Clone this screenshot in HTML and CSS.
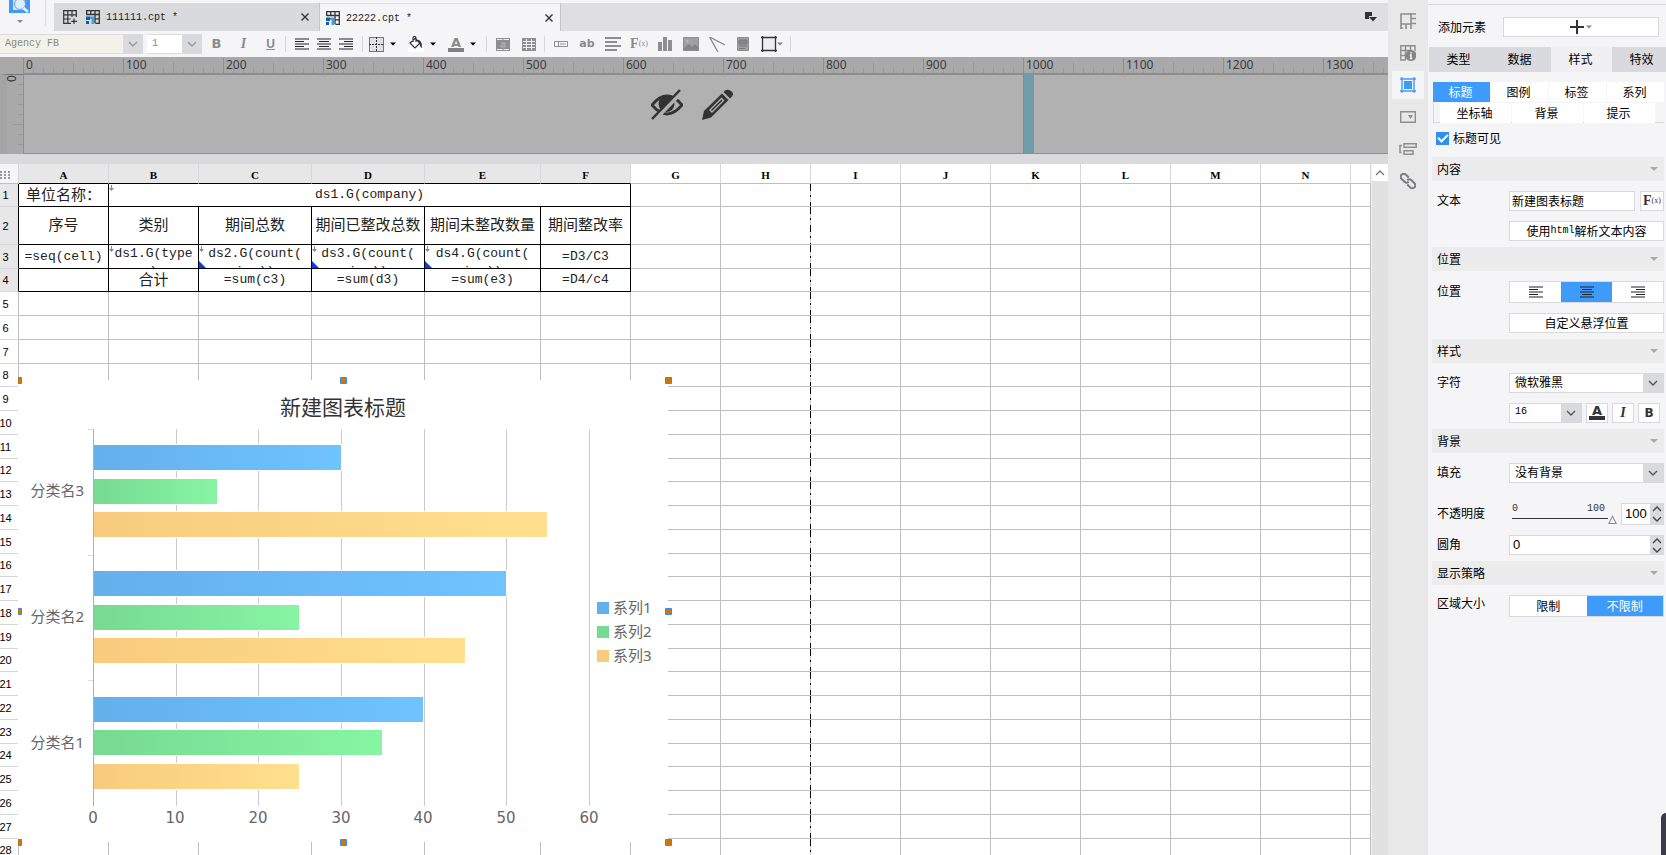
FILE: index.html
```html
<!DOCTYPE html>
<html lang="zh-CN">
<head>
<meta charset="utf-8">
<title>22222.cpt</title>
<link rel="stylesheet" href="styles.css">
</head>
<body>
<svg class="defs" width="0" height="0" aria-hidden="true">
  <symbol id="chev" viewBox="0 0 10 6"><path d="M1 1l4 4 4-4" fill="none" stroke="currentColor" stroke-width="1.4"/></symbol>
  <symbol id="chev-up" viewBox="0 0 10 6"><path d="M1 5l4-4 4 4" fill="none" stroke="currentColor" stroke-width="1.4"/></symbol>
  <symbol id="tri" viewBox="0 0 8 4"><path d="M0 0h8L4 4z" fill="currentColor"/></symbol>
  <symbol id="left" viewBox="0 0 14 12"><path d="M0 1h14M0 3.5h9M0 6h14M0 8.500h9M0 11h14" stroke="currentColor" stroke-width="1.2"/></symbol>
  <symbol id="center" viewBox="0 0 14 12"><path d="M0 1h14M2 3.500h10M0 6h14M2 8.500h10M0 11h14" stroke="currentColor" stroke-width="1.2"/></symbol>
  <symbol id="right" viewBox="0 0 14 12"><path d="M0 1h14M5 3.500h9M0 6h14M5 8.500h9M0 11h14" stroke="currentColor" stroke-width="1.2"/></symbol>
  <symbol id="cpt" viewBox="0 0 14 14"><path d="M.7 5V.7h12.600v12.600H9.500M.7 4.500h12.600M4.800.7v3.800M9 .7v12.600M9 8.800h4.300" fill="none" stroke="#333" stroke-width="1.3"/><path d="M0 6.500h4V10H0zM0 11h3v3H0z" fill="#0f5cab"/><path d="M4 6.500h4V14H5.500V9H4z" fill="#3ba3ea"/></symbol>
  <symbol id="x" viewBox="0 0 8 8"><path d="M.5.5l7 7M7.500.5l-7 7" stroke="#333" stroke-width="1.4"/></symbol>
</svg>
<div class="app">
  <main class="work">
    <header class="tabs">
      <div class="logo">
        <svg width="21" height="13" viewBox="0 0 21 13"><path d="M0 0h21v13H0z" fill="#3f9bfa"/><path d="M4 0h12v10H4z" fill="#cfe5fb"/><circle cx="11" cy="4" r="5.500" fill="#dceefc" stroke="#8b98a5"/><path d="M14.500 8l4.500 4" stroke="#eef3f8" stroke-width="2.500"/></svg>
        <svg class="dim" width="6" height="3"><use href="#tri"/></svg>
      </div>
      <div class="tab first">
        <svg width="14" height="14" viewBox="0 0 14 14"><path d="M8 13.300H.7V.7h12.600V7M.7 4.800h12.600M.7 9h7M4.800.7v12.600M9 .7V7M11 8.500v5.500M8.300 11.300H14" fill="none" stroke="#333" stroke-width="1.200"/></svg>
        <svg width="14" height="14"><use href="#cpt"/></svg>
        <span>111111.cpt *</span>
        <button class="close" aria-label="关闭 111111.cpt"><svg width="8" height="8"><use href="#x"/></svg></button>
      </div>
      <div class="tab active">
        <svg width="14" height="14"><use href="#cpt"/></svg>
        <span>22222.cpt *</span>
        <button class="close" aria-label="关闭 22222.cpt"><svg width="8" height="8"><use href="#x"/></svg></button>
      </div>
      <div class="tab-fill"><svg width="12" height="10" viewBox="0 0 12 10"><path d="M0 0h7v4H4v3H0z" fill="#333"/><path d="M4 5h8L8 9.500z" fill="#333"/></svg></div>
    </header>

    <div class="toolbar">
      <div class="combo font-family"><select aria-label="字体" disabled><option>Agency FB</option></select><span class="drop"><svg width="10" height="6"><use href="#chev"/></svg></span></div>
      <div class="combo font-size"><select aria-label="字号"><option>1</option></select><span class="drop"><svg width="10" height="6"><use href="#chev"/></svg></span></div>
      <div class="group wide">
        <button aria-label="加粗"><b>B</b></button>
        <button aria-label="倾斜"><i>I</i></button>
        <button aria-label="下划线"><u>U</u></button>
      </div>
      <div class="group aligns">
        <button aria-label="左对齐"><svg width="14" height="12"><use href="#left"/></svg></button>
        <button aria-label="居中"><svg width="14" height="12"><use href="#center"/></svg></button>
        <button aria-label="右对齐"><svg width="14" height="12"><use href="#right"/></svg></button>
      </div>
      <div class="group drops">
        <button aria-label="边框"><svg width="15" height="15" viewBox="0 0 15 15"><path d="M.5.5h14v14H.5z" fill="#e2e2e4" stroke="#000" stroke-dasharray="1 1"/><path d="M7.500 0v15M0 7.500h15" stroke="#333" stroke-dasharray="2 1"/></svg><svg class="ink" width="6" height="4"><use href="#tri"/></svg></button>
        <button aria-label="填充颜色"><svg width="16" height="16" viewBox="0 0 16 16"><path d="M0 12h16v4H0z" fill="#fff"/><path d="M7 2.500l5 4.500-5 5-5-5zM5 6V2q0-1.500 1.500-1.500T8 2v4" fill="#fff" stroke="#333" stroke-width="1.200"/><path d="M9 3.500q5.500.5 5 8.500-2-1-2.500-4z" fill="#333"/></svg><svg class="ink" width="6" height="4"><use href="#tri"/></svg></button>
        <button aria-label="字体颜色"><span class="fore">A</span><svg class="ink" width="6" height="4"><use href="#tri"/></svg></button>
      </div>
      <div class="group pair">
        <button aria-label="合并单元格"><svg width="14" height="13" viewBox="0 0 14 13"><path d="M0 0h14v13H0z" fill="#8e8e8e"/><path d="M1 1.500h5.500M7.500 1.500H13M1 11.500h5.500M7.500 11.500H13" stroke="#eee"/><path d="M5 5h4v4H5V7h4" fill="none" stroke="#b5b5b5"/></svg></button>
        <button aria-label="取消合并"><svg width="14" height="13" viewBox="0 0 14 13"><path d="M0 0h14v13H0z" fill="#8e8e8e"/><path d="M1 3.500h12M1 6.500h12M1 9.500h12M4.500 1v11M9.500 1v11" stroke="#eee"/></svg></button>
      </div>
      <div class="group insert">
        <button aria-label="文本框"><svg width="14" height="6" viewBox="0 0 14 6"><path d="M.5.5h13v5H.5zM4.500 0v6M6 3h5.500" fill="none" stroke="#8e8e8e"/></svg></button>
        <button class="ab">ab</button>
        <button aria-label="富文本"><svg width="16" height="14" viewBox="0 0 16 14"><path d="M0 1h16M0 5h12M0 9h16M0 13h12" stroke="#8e8e8e" stroke-width="1.800"/></svg></button>
        <button class="fx">F<small>(x)</small></button>
        <button aria-label="图表"><svg width="14" height="14" viewBox="0 0 14 14"><path d="M0 5h4v9H0zM5 0h4v14H5zM10 3h4v11h-4z" fill="#8e8e8e"/></svg></button>
        <button aria-label="图片"><svg width="16" height="14" viewBox="0 0 16 14"><path d="M.5.5h15v13H.5z" fill="#a0a0a0" stroke="#8e8e8e"/><path d="M1 11l5-4 3 3 3-3 3 3v3H1z" fill="#858585"/><circle cx="4" cy="4" r="1.500" fill="#b5b5b5"/></svg></button>
        <button aria-label="斜线"><svg width="16" height="15" viewBox="0 0 16 15"><path d="M.5 0L9 15M.5 0L16 8" stroke="#8e8e8e" stroke-width="1.400"/></svg></button>
        <button aria-label="子报表"><svg width="12" height="14" viewBox="0 0 12 14"><path d="M.5.5h11v13H.5z" fill="#a0a0a0" stroke="#8e8e8e"/><path d="M2 3h8v4H2zM2 9h8M2 11.500h6" fill="#858585" stroke="#7b7b7b"/></svg></button>
        <button aria-label="悬浮元素"><svg width="16" height="16" viewBox="0 0 16 16"><path d="M2 2h12v12H2z" fill="#eee"/><path d="M0 1.500h16M0 14.500h16M1.500 0v16M14.500 0v16" stroke="#333" stroke-width="1.300"/></svg><svg class="dim" width="6" height="4"><use href="#tri"/></svg></button>
      </div>
    </div>

    <section class="designer">
      <div class="ruler-x" id="rulerX"></div>
      <div class="ruler-y"><span>0</span></div>
      <div class="canvas">
        <div class="canvas-tools">
          <svg width="32" height="31" viewBox="0 0 32 31"><path d="M1 16Q16-2 31 16 16 34 1 16z" fill="none" stroke="#333" stroke-width="2.800"/><circle cx="15.500" cy="15" r="8" fill="#333"/><path d="M3 31L31 2" stroke="#b1b1b1" stroke-width="5"/><path d="M1 30L29 1" stroke="#333" stroke-width="2.500"/></svg>
          <svg width="31" height="31" viewBox="0 0 31 31"><path d="M20 4.500l6.500 6.500L9 28.500 0 31l2-9z" fill="#333"/><path d="M21.500 3Q24.500-1 29 2t-1 7.500z" fill="#333"/><path d="M8 21L19.500 9.500l2 2L10 23z" fill="none" stroke="#b1b1b1" stroke-width="1.400"/></svg>
        </div>
        <div class="guide"></div>
      </div>
    </section>

    <section class="sheet-wrap">
      <div class="sheet">
        <table>
          <colgroup><col class="c-num"><col class="c90"><col class="c90"><col class="c113"><col class="c113"><col class="c116"><col class="c90"><col class="c90"><col class="c90"><col class="c90"><col class="c90"><col class="c90"><col class="c90"><col class="c90"><col class="c90"><col></colgroup>
          <thead><tr><th class="corner"><svg width="10" height="8" viewBox="0 0 10 8"><path d="M1 0v8M5 0v8M9 0v8" stroke="#999" stroke-width="2" stroke-dasharray="2 1"/></svg></th><th class="sel">A</th><th class="sel">B</th><th class="sel">C</th><th class="sel">D</th><th class="sel">E</th><th class="sel">F</th><th>G</th><th>H</th><th>I</th><th>J</th><th>K</th><th>L</th><th>M</th><th>N</th><th></th></tr></thead>
          <tbody id="rows">
            <tr class="r23 data"><th><span>1</span></th><td class="k cn">单位名称：</td><td class="k mark" colspan="5">ds1.G(company)</td><td></td><td class="page"></td><td></td><td></td><td></td><td></td><td></td><td></td><td></td></tr>
            <tr class="r38 data"><th><span>2</span></th><td class="k cn">序号</td><td class="k cn">类别</td><td class="k cn">期间总数</td><td class="k cn">期间已整改总数</td><td class="k cn">期间未整改数量</td><td class="k cn">期间整改率</td><td></td><td class="page"></td><td></td><td></td><td></td><td></td><td></td><td></td><td></td></tr>
            <tr class="r24 data"><th><span>3</span></th><td class="k">=seq(cell)</td><td class="k mark"><div class="clip">ds1.G(type<br>)</div></td><td class="k mark blue"><div class="clip">ds2.G(count(<br>iss))</div></td><td class="k mark blue"><div class="clip">ds3.G(count(<br>iss))</div></td><td class="k mark blue"><div class="clip">ds4.G(count(<br>iss))</div></td><td class="k">=D3/C3</td><td></td><td class="page"></td><td></td><td></td><td></td><td></td><td></td><td></td><td></td></tr>
            <tr class="r23 data"><th><span>4</span></th><td class="k"></td><td class="k cn">合计</td><td class="k">=sum(c3)</td><td class="k">=sum(d3)</td><td class="k">=sum(e3)</td><td class="k">=D4/c4</td><td></td><td class="page"></td><td></td><td></td><td></td><td></td><td></td><td></td><td></td></tr>
          </tbody>
        </table>
        <div class="float-layer">
          <svg class="chart" width="654" height="470" viewBox="0 -4 654 470">
            <defs>
              <linearGradient id="gb"><stop stop-color="#63b0eb"/><stop offset="1" stop-color="#6fc3ff"/></linearGradient>
              <linearGradient id="gg"><stop stop-color="#76da91"/><stop offset="1" stop-color="#87f5a4"/></linearGradient>
              <linearGradient id="gy"><stop stop-color="#f8cb7f"/><stop offset="1" stop-color="#ffe08e"/></linearGradient>
            </defs>
            <path d="M0 0h650v462H0z" fill="#fff"/>
            <text class="c-title" x="325" y="35" text-anchor="middle">新建图表标题</text>
            <path d="M158.500 49v377M240.500 49v377M323.500 49v377M406.500 49v377M488.500 49v377M571.500 49v377" stroke="#ccc"/>
            <path d="M70 49.500h5M70 175.500h5M70 300.500h5" stroke="#ddd"/>
            <g stroke="#fff">
              <g fill="url(#gb)"><path d="M75 64.500h248.500v26H75z"/><path d="M75 190.500h413.500v26H75z"/><path d="M75 316.500h330.500v26H75z"/></g>
              <g fill="url(#gg)"><path d="M75 98.500h124.500v26H75z"/><path d="M75 224.500h206.500v26H75z"/><path d="M75 349.500h289.500v26H75z"/></g>
              <g fill="url(#gy)"><path d="M75 131.500h454.500v26H75z"/><path d="M75 257.500h372.500v26H75z"/><path d="M75 383.500h206.500v26H75z"/></g>
            </g>
            <path d="M75.500 49v377" stroke="#b0b0b0"/>
            <g class="c-cat" text-anchor="end"><text x="66" y="116">分类名3</text><text x="66" y="242">分类名2</text><text x="66" y="368">分类名1</text></g>
            <g class="c-axis" text-anchor="middle"><text x="75" y="443">0</text><text x="157" y="443">10</text><text x="240" y="443">20</text><text x="323" y="443">30</text><text x="405" y="443">40</text><text x="488" y="443">50</text><text x="571" y="443">60</text></g>
            <path d="M579 222h12v12h-12z" fill="#63b0eb"/><path d="M579 246h12v12h-12z" fill="#76da91"/><path d="M579 270h12v12h-12z" fill="#f8cb7f"/>
            <g class="c-cat"><text x="595" y="233">系列1</text><text x="595" y="257">系列2</text><text x="595" y="281">系列3</text></g>
            <g fill="#c87810" stroke="#3c8cf0"><path d="M-2.500-2.500h6v6h-6zM322.500-2.500h6v6h-6zM647.500-2.500h6v6h-6zM-2.500 228.500h6v6h-6zM647.500 228.500h6v6h-6zM-2.500 459.500h6v6h-6zM322.500 459.500h6v6h-6zM647.500 459.500h6v6h-6z"/></g>
          </svg>
        </div>
      </div>
      <div class="scroll"><button aria-label="向上滚动"><svg width="10" height="6"><use href="#chev-up"/></svg></button></div>
    </section>
  </main>

  <nav class="rail">
    <button aria-label="单元格元素"><svg width="16" height="16" viewBox="0 0 16 16"><path d="M16 1H1v15M1 11h10M11 0v11M11 5.500h5M11 10.500h5M6 11v5M11 11v5M1 15h2" fill="none" stroke="#8e8e8e" stroke-width="1.600"/></svg></button>
    <button aria-label="单元格属性"><svg width="16" height="16" viewBox="0 0 16 16"><path d="M15 6V.8H.8V15H6M.8 5.500H12M.8 10.500H6M5.500.8V15M10.500.8V5" fill="none" stroke="#8e8e8e" stroke-width="1.400"/><circle cx="11" cy="10.500" r="5.500" fill="#858585"/><path d="M11 7v1.500M9.800 10H11v3.500M9.800 13.500h2.400" stroke="#fff" stroke-width="1.300" fill="none"/></svg></button>
    <button class="on" aria-label="悬浮元素"><svg width="16" height="16" viewBox="0 0 16 16"><path d="M0 2h16M0 14h16M2 0v16M14 0v16" stroke="#3f9bfa" stroke-width="1.400"/><path d="M4 4h8v8H4z" fill="#3f9bfa"/></svg></button>
    <button aria-label="控件设置"><svg width="16" height="12" viewBox="0 0 16 12"><path d="M.7.7h14.600v10.600H.7z" fill="none" stroke="#8e8e8e" stroke-width="1.400"/><path d="M8 4h5l-2.500 4z" fill="#8e8e8e"/></svg></button>
    <button aria-label="条件属性"><svg width="18" height="12" viewBox="0 0 18 12"><path d="M5 .8h12.200v3.500H5zM5 7.800h9v3.500H5zM3 2.500H1v7h1.500" fill="none" stroke="#8e8e8e" stroke-width="1.500"/></svg></button>
    <button aria-label="超级链接"><svg width="16" height="16" viewBox="0 0 16 16"><g fill="none" stroke="#777a80" stroke-width="2" transform="rotate(45 8 8)"><path d="M6 5H2Q-1 5-1 8t3 3h4q3 0 3-3"/><path d="M10 11h4q3 0 3-3t-3-3h-4Q7 5 7 8"/></g></svg></button>
  </nav>

  <aside class="panel">
    <div class="add-row"><span>添加元素</span><button aria-label="添加元素" class="box"><svg width="14" height="14" viewBox="0 0 14 14"><path d="M7 0v14M0 7h14" stroke="#333" stroke-width="2"/></svg><svg class="dim" width="6" height="4"><use href="#tri"/></svg></button></div>
    <div class="main-tabs"><button>类型</button><button>数据</button><button class="on">样式</button><button>特效</button></div>
    <div class="body">
      <div class="sub four"><button class="on">标题</button><button>图例</button><button>标签</button><button>系列</button></div>
      <div class="sub three"><button>坐标轴</button><button>背景</button><button>提示</button></div>
      <label class="check"><input type="checkbox" checked>标题可见</label>

      <h3>内容<svg width="8" height="4"><use href="#tri"/></svg></h3>
      <div class="rows">
        <div class="row"><label for="txt">文本</label><div class="ctl gap5"><input id="txt" class="box grow" value="新建图表标题"><button class="box fx">F<small>(x)</small></button></div></div>
        <div class="row"><span></span><button class="box ctl">使用<span class="mono">html</span>解析文本内容</button></div>
      </div>
      <h3>位置<svg width="8" height="4"><use href="#tri"/></svg></h3>
      <div class="rows">
        <div class="row"><span>位置</span><div class="seg"><button aria-label="左"><svg width="14" height="12"><use href="#left"/></svg></button><button class="on" aria-label="中"><svg width="14" height="12"><use href="#center"/></svg></button><button aria-label="右"><svg width="14" height="12"><use href="#right"/></svg></button></div></div>
        <div class="row"><span></span><button class="box ctl">自定义悬浮位置</button></div>
      </div>
      <h3>样式<svg width="8" height="4"><use href="#tri"/></svg></h3>
      <div class="rows">
        <div class="row"><label for="face">字符</label><div class="combo box"><select id="face"><option>微软雅黑</option></select><span class="drop"><svg width="10" height="6"><use href="#chev"/></svg></span></div></div>
        <div class="row"><span></span><div class="ctl gap4"><div class="combo box size"><select aria-label="字号" class="mono"><option>16</option></select><span class="drop"><svg width="10" height="6"><use href="#chev"/></svg></span></div><button class="box sq" aria-label="颜色"><span class="fore dark">A</span></button><button class="box sq" aria-label="倾斜"><i>I</i></button><button class="box sq" aria-label="加粗"><b>B</b></button></div></div>
      </div>
      <h3>背景<svg width="8" height="4"><use href="#tri"/></svg></h3>
      <div class="rows">
        <div class="row"><label for="fill">填充</label><div class="combo box"><select id="fill"><option>没有背景</option></select><span class="drop"><svg width="10" height="6"><use href="#chev"/></svg></span></div></div>
        <div class="row spaced"><label for="op">不透明度</label><div class="ctl gap4"><div class="slider"><div class="scale"><span>0</span><span>100</span></div><input type="range" value="100" aria-label="不透明度"></div><div class="spin box small"><input id="op" value="100"><span class="steps"><svg width="10" height="6"><use href="#chev-up"/></svg><svg width="10" height="6"><use href="#chev"/></svg></span></div></div></div>
        <div class="row"><label for="rad">圆角</label><div class="spin box"><input id="rad" value="0"><span class="steps"><svg width="10" height="6"><use href="#chev-up"/></svg><svg width="10" height="6"><use href="#chev"/></svg></span></div></div>
      </div>
      <h3>显示策略<svg width="8" height="4"><use href="#tri"/></svg></h3>
      <div class="rows">
        <div class="row top"><span>区域大小</span><div class="seg"><button>限制</button><button class="on">不限制</button></div></div>
      </div>
    </div>
    <div class="handle"></div>
  </aside>
</div>
<script src="app.js"></script>
</body>
</html>
```
FILE: styles.css
```css
* { box-sizing: border-box; }
html, body { height: 100%; margin: 0; }
body { overflow: hidden; font: 12px/16px "Noto Sans CJK SC", sans-serif; color: #000; background: #f5f5f8; }
button, input, select { font: inherit; color: inherit; border: 0; border-radius: 0; padding: 0; margin: 0; background: none; outline: 0; min-width: 0; }
select { appearance: none; }
button { display: flex; align-items: center; justify-content: center; white-space: nowrap; }
svg { display: block; flex: none; }
.defs { position: absolute; }
.mono { font-family: "Liberation Mono", monospace; font-size: 10px; }
.dim { color: #888; }
.ink { color: #000; }

.app { display: grid; grid-template-columns: minmax(0, 1fr) 40px 238px; height: 100vh; }
.work { display: grid; grid-template-rows: 31px 26px 97px 10px minmax(0, 1fr); background: #dadadc; min-height: 0; }

.tabs { display: flex; padding-top: 3px; background: #f5f5f8; }
.logo { width: 54px; margin-top: -3px; display: flex; flex-direction: column; align-items: center; gap: 7px; padding-right: 15px; background: linear-gradient(#ddd, #ddd) 45px 0 / 1px 26px no-repeat; }
.tab { display: flex; align-items: center; gap: 6px; width: 266px; padding: 0 7px 0 9px; background: #d9dade; font: 10px/16px "Liberation Mono", monospace; color: #222; border-right: 1px solid #c5c5c9; }
.tab span { padding-top: 2px; }
.first svg:first-child { margin-right: 3px; }
.tab.active { width: 241px; padding-left: 6px; background: #f5f5f8; border-top: 1px solid #dfdfe1; }
.close { margin-left: auto; }
.tab-fill { flex: 1; display: flex; align-items: center; justify-content: flex-end; padding-right: 11px; background: #dfdfe1; }

.toolbar { display: flex; align-items: center; background: #f5f5f8; color: #8a8a8a; }
.combo { display: flex; height: 20px; background: #fff; }
.combo select { flex: 1; padding-left: 5px; }
.drop { display: flex; align-items: center; justify-content: center; width: 20px; background: #d9dade; color: #555; }
.toolbar .combo select { font: 10px/18px "Liberation Mono", monospace; color: #888; opacity: 1; }
.toolbar .drop { color: #999; }
.toolbar .combo { border: 1px solid #dcdcde; border-width: 1px 0; }
.font-family { width: 143px; }
.font-family select { background: #f2f2e9; }
.font-size { width: 55px; margin-left: 4px; }
.group { display: flex; align-items: center; height: 16px; border-right: 1px solid #d8d8da; }
.group b { font: 700 13px/16px "DejaVu Sans", sans-serif; }
.group i { font: italic 700 14px/16px "Liberation Serif", serif; }
.group u { font: 700 12px/16px "Liberation Sans", sans-serif; }
.wide { width: 84px; gap: 16px; padding-left: 9px; }
.wide button { width: 11px; }
.aligns { width: 77px; gap: 8px; padding-left: 9px; color: #222; }
.drops { width: 124px; gap: 12px; padding-left: 6px; }
.drops button { gap: 6px; }
.fore { font: 700 13px/11px "DejaVu Sans", sans-serif; width: 16px; border-bottom: 4px solid #808080; text-align: center; }
.fore.dark { color: #333; border-color: #333; }
.pair { width: 58px; gap: 12px; padding-left: 9px; }
.insert { width: 246px; gap: 10px; padding-left: 8px; }
.insert button { flex: none; width: 16px; }
.insert button:last-child { width: 22px; }
.ab { font: 700 11px/16px "DejaVu Sans", sans-serif; }
.fx { font: 700 14px/16px "Liberation Serif", serif; }
.fx small { font-size: 8px; font-weight: 400; }

.designer { display: grid; grid-template: 17px 80px / 23px minmax(0, 1fr); background: #a9a9a9; }
.ruler-x { grid-column: 2; display: flex; overflow: hidden; border-bottom: 1px solid #8e8e8e;
  background: repeating-linear-gradient(90deg, #8e8e8e 0 1px, transparent 1px 100px) 0 1px / 100% 15px no-repeat,
    repeating-linear-gradient(90deg, #999 0 1px, transparent 1px 50px) 0 5px / 100% 11px no-repeat,
    repeating-linear-gradient(90deg, #999 0 1px, transparent 1px 10px) 0 11px / 100% 5px no-repeat; }
.ruler-x span { flex: 0 0 100px; padding-left: 3px; font: 12px/16px "Noto Sans", sans-serif; color: #3c3c3c; }
.ruler-y { grid-column: 1; border-left: 7px solid #a4a4a4; border-top: 1px solid #777;
  background: linear-gradient(#999, #999) right 49px / 11px 1px no-repeat, repeating-linear-gradient(transparent 0 9px, #999 9px 10px) right 0 / 5px 100% no-repeat; }
.ruler-y span { display: block; width: 10px; height: 10px; font: 12px/10px "Noto Sans", sans-serif; color: #333; text-align: right; transform: rotate(-90deg); }
.canvas { position: relative; display: flex; justify-content: center; background: #b1b1b1; border: solid #8e8e8e; border-width: 1px 0 1px 1px; }
.canvas-tools { display: flex; gap: 19px; padding: 14px 29px 0 0; }
.guide { position: absolute; left: 999px; top: -1px; bottom: -1px; width: 11px; background: #6f9ca8; border-left: 1px solid #888; }

.sheet-wrap { grid-row: 5; display: grid; grid-template-columns: minmax(0, 1fr) 17px; min-height: 0; background: #fff; }
.sheet { position: relative; overflow: hidden; }
table { width: 100%; table-layout: fixed; border-collapse: separate; border-spacing: 0; }
.c-num { width: 19px; }
.c90 { width: 90px; }
.c113 { width: 113px; }
.c116 { width: 116px; }
th, td { padding: 0; height: 24px; border: solid #bfbfbf; border-width: 0 1px 1px 0; overflow: hidden; white-space: nowrap; text-align: center; }
thead th { height: 20px; padding-top: 3px; border-right-color: #d8d8dc; font: 700 11px/16px "Liberation Serif", serif; }
thead .sel { background: #e7e7e7; border-bottom-color: #000; }
.corner { background: #f5f5f8; }
tbody th { font: 11px/16px "Liberation Sans", sans-serif; border-bottom-color: #d5d5da; }
tbody th span { display: flex; justify-content: center; width: 11px; }
.data th { background: #e7e7e7; border-right-color: #000; }
.r23 > * { height: 23px; }
.r38 > * { height: 38px; }
.r24 > * { height: 24px; }
.k { border-color: #000; font: 13px/16px "Liberation Mono", monospace; position: relative; color: #222; }
.cn { padding-bottom: 3px; font: 15px/18px "Noto Sans CJK SC", sans-serif; }
.clip { height: 23px; overflow: hidden; line-height: 18px; }
.mark::before { content: ""; position: absolute; left: 0; top: 1px; width: 5px; height: 6px; background: #888; clip-path: polygon(40% 0, 60% 0, 60% 50%, 100% 50%, 50% 100%, 0 50%, 40% 50%); }
.blue::after { content: ""; position: absolute; left: 0; bottom: 0; width: 0; height: 0; border: solid transparent; border-width: 7px 0 0 7px; border-left-color: #0a3cf0; }
.page { border-right: 0; background: repeating-linear-gradient(#000 0 7px, #ccc 7px 11px, #000 11px 13px, #ccc 13px 18px) right top / 1px 100% no-repeat; }
.float-layer { position: absolute; left: 18px; top: 212px; width: 654px; height: 470px; overflow: hidden; }
.c-title { font: 21px "Noto Sans CJK SC", sans-serif; fill: #333; }
.c-cat { font: 15px "Noto Sans", "Noto Sans CJK SC", sans-serif; fill: #666; }
.c-axis { font: 15px "DejaVu Sans", sans-serif; fill: #666; }
.scroll { background: #e1e1e1; border-left: 1px solid #f0f0f0; }
.scroll button { width: 100%; height: 17px; background: #fff; color: #777; }

.rail { display: flex; flex-direction: column; align-items: center; gap: 4px; padding-top: 7px; background: #e8e8e8; }
.rail button { width: 32px; height: 28px; }
.rail .on { background: #f5f5f8; }

.panel { position: relative; overflow: hidden; background: linear-gradient(#d9d9dc, #d9d9dc) 0 4px / 100% 1px no-repeat #f5f5f8; }
.box { background: #fff; border: 1px solid #d9d9dc; }
.add-row { display: flex; align-items: center; gap: 17px; padding: 17px 7px 0 10px; }
.add-row .box { flex: 1; height: 20px; gap: 2px; }
.main-tabs { display: flex; margin: 10px 0 0 1px; }
.main-tabs button { flex: none; width: 61px; height: 25px; padding: 0 2px 2px 0; background: #d9dade; }
.main-tabs .on { background: #f0f0f3; }
.body { padding: 10px 2px 0 4px; }
.sub { display: grid; gap: 1px; padding-left: 1px; }
.sub button { height: 20px; padding: 0 2px 1px 0; background: #fff; }
.four { grid-template-columns: repeat(4, 1fr); }
.three { grid-template-columns: repeat(3, 1fr); margin: 1px 0 0 1px; padding: 0 9px 0 6px; border: solid #d9d9dc; border-width: 0 0 1px 1px; height: 20px; }
.sub .on, .seg .on { background: #3f9bfa; color: #fff; }
.check { display: flex; align-items: center; gap: 4px; height: 16px; margin: 7px 0 11px 4px; }
.check input { appearance: none; width: 13px; height: 13px; background: #2f8fee; display: grid; place-items: center; }
.check input::before { content: ""; width: 8px; height: 4px; border: solid #fff; border-width: 0 0 2px 2px; transform: translateY(-1px) rotate(-45deg); }
h3 { display: flex; align-items: center; justify-content: space-between; height: 24px; margin: 0; padding: 0 6px 0 5px; font: inherit; background: #ececec; }
h3 svg { color: #aaa; }
.rows { display: grid; gap: 10px; padding: 10px 0 6px 5px; }
.row { display: grid; grid-template-columns: 72px minmax(0, 1fr); align-items: center; }
.row > label, .row > span { padding-bottom: 2px; }
.row.top { align-items: start; }
.spaced { margin-top: 10px; }
.ctl { display: flex; }
.gap5 { gap: 5px; }
.gap4 { gap: 4px; }
.row button { height: 20px; padding-bottom: 1px; }
.grow { flex: 1; height: 20px; padding: 0 0 2px 2px; }
.row .fx { width: 24px; color: #333; }
.row .combo select { padding-bottom: 2px; }
.row .size { width: 73px; }
.row .sq { width: 22px; color: #333; }
.sq i { font: italic 700 14px/16px "Liberation Serif", serif; }
.sq b { font: 700 12px/16px "DejaVu Sans", sans-serif; }
.seg { display: flex; border: 1px solid #d9d9dc; background: #fff; height: 22px; }
.seg button { flex: 1; }
.seg svg { color: #222; }
.spin { display: flex; height: 20px; }
.spin input { flex: 1; width: 10px; padding: 0 0 1px 3px; font: 13px/16px "Liberation Sans", sans-serif; }
.spin.small { width: 43px; height: 22px; }
.steps { display: flex; flex-direction: column; justify-content: space-around; align-items: center; width: 13px; background: #d9dade; color: #444; }
.slider { flex: 1; padding-left: 3px; height: 22px; }
.scale { display: flex; justify-content: space-between; padding-right: 12px; font: 10px/12px "Liberation Mono", monospace; color: #333; }
.slider input { appearance: none; display: block; width: 100%; height: 9px; background: linear-gradient(#333, #333) 0 3px / 96px 1px no-repeat; }
.slider input::-webkit-slider-thumb { appearance: none; width: 9px; height: 9px; background: #888; clip-path: polygon(50% 0, 100% 100%, 0 100%, 50% 0, 50% 24%, 18% 88%, 82% 88%, 50% 24%); }
.handle { position: absolute; right: 0; bottom: 0; width: 5px; height: 42px; background: #3a3d46; border-radius: 5px 0 0 0; }
```
FILE: app.js
```js
const ruler = document.getElementById("rulerX");
for (let n = 0; n <= 1300; n += 100) {
  const s = document.createElement("span");
  s.textContent = n;
  ruler.append(s);
}

const rows = document.getElementById("rows");
const empty = Array.from({ length: 15 }, (_, i) => (i === 7 ? '<td class="page"></td>' : "<td></td>")).join("");
for (let r = 5; r <= 28; r++) {
  const tr = document.createElement("tr");
  tr.className = r % 4 === 0 ? "r23" : "r24";
  tr.innerHTML = `<th><span>${r}</span></th>${empty}`;
  rows.append(tr);
}
```
